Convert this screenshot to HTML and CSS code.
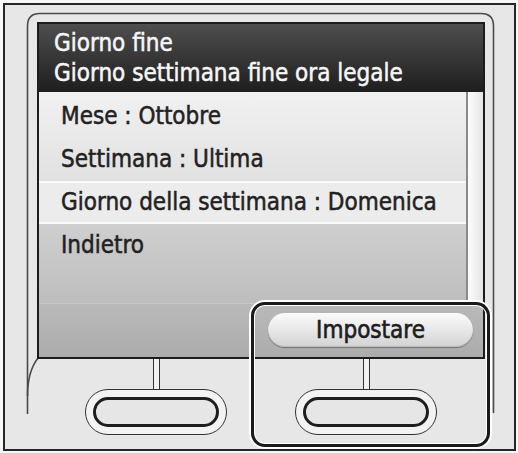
FILE: index.html
```html
<!DOCTYPE html>
<html lang="it">
<head>
<meta charset="utf-8">
<title>Giorno fine</title>
<link rel="stylesheet" href="styles.css">
</head>
<body>
<div class="device">
  <svg class="bezel" width="513" height="448" viewBox="3 3 513 448" aria-hidden="true">
    <path d="M27.5,414 L27.5,26 Q27.5,13.5 40,13.5 L481,13.5 Q493.5,13.5 493.5,26 L493.5,413" fill="none" stroke="#4a4a4a" stroke-width="1.6"/>
    <path d="M38,358 C31,367 27.5,380 27.5,396" fill="none" stroke="#4a4a4a" stroke-width="1.6"/>
  </svg>
  <div class="screen">
    <div class="header">
      <div class="title">Giorno fine</div>
      <div class="title">Giorno settimana fine ora legale</div>
    </div>
    <div class="body">
      <div class="list-wrap">
        <ul class="list">
          <li class="row">Mese : Ottobre</li>
          <li class="row">Settimana : Ultima</li>
          <li class="row row-sel">Giorno della settimana : Domenica</li>
          <li class="row">Indietro</li>
        </ul>
        <div class="scrollbar"></div>
      </div>
      <div class="softkeys">
        <div class="pill">Impostare</div>
      </div>
    </div>
  </div>
  <div class="keys">
    <div class="key"><div class="stem"></div><div class="btn"><div class="btn-in"></div></div></div>
    <div class="key"><div class="stem"></div><div class="btn"><div class="btn-in"></div></div></div>
  </div>
  <div class="focus"></div>
</div>
</body>
</html>
```
FILE: styles.css
```css
* { box-sizing: border-box; }
html, body { margin: 0; padding: 0; background: #f7f7f7; }
body { width: 518px; height: 453px; overflow: hidden; font-family: "DejaVu Sans Condensed", "DejaVu Sans", sans-serif; font-stretch: condensed; }

.device {
  position: relative;
  margin: 3px 0 0 3px;
  width: 513px;
  height: 448px;
  border: 2px solid #262626;
  background: #e7e7e7;
  padding: 17px 0 0 32px;
}
.bezel { position: absolute; left: -2px; top: -2px; pointer-events: none; }

.screen {
  position: relative;
  width: 448px;
  height: 337px;
  border: 2px solid #1c1c1c;
  display: flex;
  flex-direction: column;
  background: linear-gradient(#f0f0f0 0, #e2e2e2 90px, #d2d2d2 160px, #aaaaaa 100%);
}
.header {
  height: 68px;
  padding: 4px 0 0 15px;
  background: linear-gradient(#4e4e4e, #1e1e1e);
  color: #f6f6f6;
  font-size: 24px;
  line-height: 30px;
  -webkit-text-stroke: 0.5px #f6f6f6;
  flex: none;
}
.body { flex: 1; display: flex; flex-direction: column; }
.list-wrap { display: flex; height: 211px; }
.list {
  list-style: none;
  margin: 0;
  padding: 3px 0 0 0;
  flex: 1;
  background: linear-gradient(#f1f1f1 0, #e1e1e1 89px, #cfcfcf 132px, #bdbdbd 100%);
}
.row {
  height: 43px;
  line-height: 43px;
  padding-left: 22px;
  font-size: 24px;
  color: #222;
  -webkit-text-stroke: 0.5px #222;
  white-space: nowrap;
}
.row-sel {
  background: #ececec;
  border-top: 2px solid #fafafa;
  border-bottom: 2px solid #fafafa;
  line-height: 39px;
}
.scrollbar {
  width: 17px;
  border-left: 2px solid #8a8a8a;
  background: linear-gradient(90deg, #fdfdfd, #e4e4e4);
}
.softkeys {
  flex: 1;
  display: flex;
  justify-content: flex-end;
  align-items: center;
  padding: 0 10px 2px 0;
  background: linear-gradient(#b9b9b9, #acacac);
  border-top: 1px solid #c8c8c8;
}
.pill {
  width: 205px;
  height: 34px;
  border-radius: 17px;
  background: linear-gradient(#fbfbfb, #e8e8e8 50%, #d2d2d2);
  box-shadow: 0 1px 1px rgba(0,0,0,0.35), inset 0 -1px 1px rgba(0,0,0,0.12);
  text-align: center;
  font-size: 24px;
  line-height: 34px;
  color: #1e1e1e;
  -webkit-text-stroke: 0.6px #1e1e1e;
}

.keys {
  width: 448px;
  display: flex;
  justify-content: center;
  gap: 68px;
}
.key { display: flex; flex-direction: column; align-items: center; }
.stem {
  width: 7px;
  height: 30px;
  border-left: 1px solid #333;
  border-right: 1px solid #333;
  background: #f2f2f2;
}
.btn {
  width: 142px;
  height: 46px;
  border: 1px solid #333;
  border-radius: 23px;
  background: #f3f3f3;
  padding: 7px;
}
.btn-in {
  width: 100%;
  height: 100%;
  border: 3px solid #1e1e1e;
  border-radius: 15px;
  background: #e6e6e6;
}

.focus {
  position: absolute;
  left: 246px;
  top: 297px;
  width: 239px;
  height: 145px;
  border: 3px solid #1a1a1a;
  border-radius: 14px;
  box-shadow: 0 0 0 2px #fff, inset 0 0 0 1px #fff;
  pointer-events: none;
}
```
